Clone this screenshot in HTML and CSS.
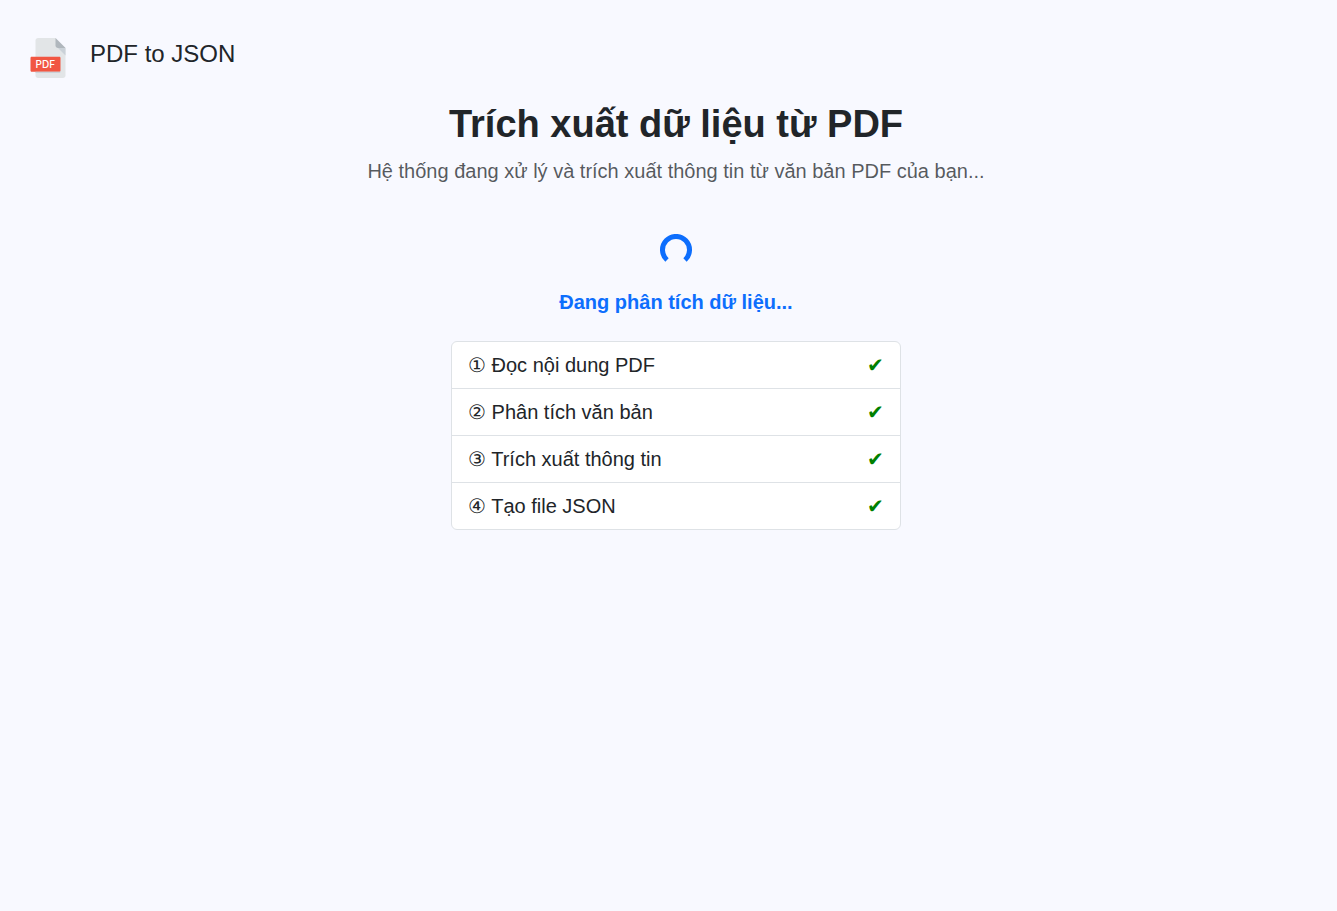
FILE: index.html
```html
<!DOCTYPE html>
<html lang="vi">
<head>
<meta charset="utf-8">
<meta name="viewport" content="width=device-width, initial-scale=1">
<title>PDF to JSON</title>
<link rel="stylesheet" href="styles.css">
</head>
<body class="page">
<header class="brand">
  <svg class="brand-icon" viewBox="0 0 512 512" aria-hidden="true">
    <path fill="#e2e5e7" d="M128 0c-17.600 0-32 14.400-32 32v448c0 17.600 14.400 32 32 32h320c17.600 0 32-14.400 32-32V128L352 0H128z"/>
    <path fill="#b0b7bd" d="M384 128h96L352 0v96c0 17.600 14.400 32 32 32z"/>
    <path fill="#cad1d8" d="M480 224l-96-96h96z"/>
    <path fill="#f15642" d="M416 416c0 8.800-7.200 16-16 16H48c-8.800 0-16-7.200-16-16V256c0-8.800 7.200-16 16-16h352c8.800 0 16 7.200 16 16v160z"/>
    <path fill="#cad1d8" d="M400 432H96v16h304c8.800 0 16-7.200 16-16v-16c0 8.800-7.200 16-16 16z"/>
    <text class="brand-icon-label" x="222" y="386" text-anchor="middle">PDF</text>
  </svg>
  <span class="brand-name">PDF to JSON</span>
</header>
<main class="content">
  <h1 class="title">Trích xuất dữ liệu từ PDF</h1>
  <p class="subtitle">Hệ thống đang xử lý và trích xuất thông tin từ văn bản PDF của bạn...</p>
  <svg class="spinner" viewBox="0 0 32 32" aria-hidden="true">
    <path d="M7 26A13.500 13.500 0 1 1 25 26"/>
  </svg>
  <p class="status" role="status">Đang phân tích dữ liệu...</p>
  <ul class="steps">
    <li class="step"><span>① Đọc nội dung PDF</span><span class="check">✔</span></li>
    <li class="step"><span>② Phân tích văn bản</span><span class="check">✔</span></li>
    <li class="step"><span>③ Trích xuất thông tin</span><span class="check">✔</span></li>
    <li class="step"><span>④ Tạo file JSON</span><span class="check">✔</span></li>
  </ul>
</main>
</body>
</html>
```
FILE: styles.css
```css
* {
  box-sizing: border-box;
}

.page {
  margin: 0;
  padding: 38px 13px 32px 28px;
  background: #f8f9ff;
  color: #212529;
  font-family: "Liberation Sans", Arial, sans-serif;
  font-size: 20px;
  line-height: 30px;
}

.brand {
  display: flex;
  align-items: flex-start;
  gap: 22px;
}

.brand-icon {
  width: 40px;
  height: 40px;
}

.brand-icon-label {
  fill: #fff;
  font-family: Inter, sans-serif;
  font-size: 128px;
  font-weight: 500;
}

.brand-name {
  font-size: 24px;
  line-height: 32px;
}

.content {
  display: flex;
  flex-direction: column;
  align-items: center;
  margin-top: 22px;
  text-align: center;
}

.title {
  margin: 0 0 8px;
  font-size: 38px;
  line-height: 48px;
}

.subtitle {
  margin: 0 0 48px;
  color: rgba(33, 37, 41, 0.75);
}

.spinner {
  width: 32px;
  height: 32px;
  fill: none;
  stroke: #0d6efd;
  stroke-width: 5;
}

.status {
  margin: 21px 0 24px;
  color: #0d6efd;
  font-weight: bold;
}

.steps {
  width: 100%;
  max-width: 450px;
  margin: 0;
  padding: 0;
  border: 1px solid #dee2e6;
  border-radius: 6px;
  background: #fff;
  list-style: none;
}

.step {
  display: flex;
  justify-content: space-between;
  padding: 8px 16px;
}

.step + .step {
  border-top: 1px solid #dee2e6;
}

.check {
  color: green;
}
```
